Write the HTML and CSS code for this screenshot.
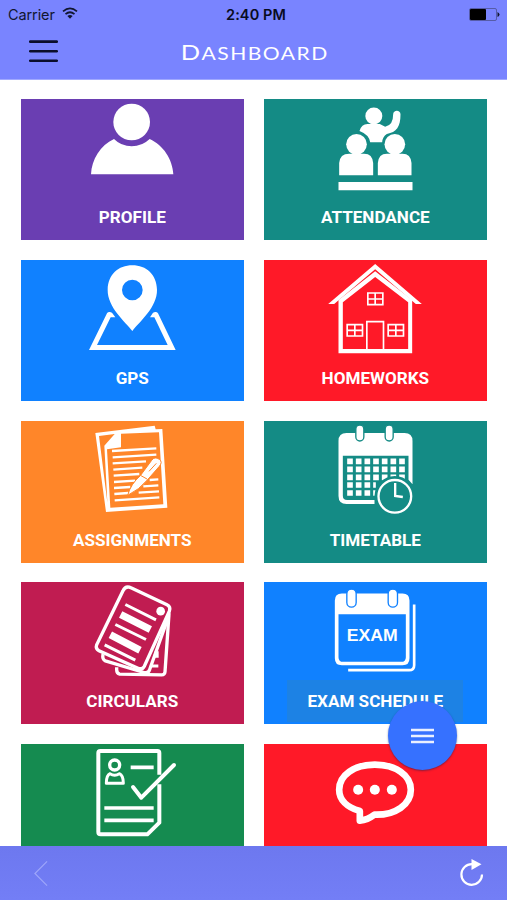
FILE: index.html
```html
<!DOCTYPE html>
<html lang="en">
<head>
<meta charset="utf-8">
<title>Dashboard</title>
<link rel="stylesheet" href="styles.css">
</head>
<body>
<div class="app">
  <header class="header">
    <div class="status">
      <div class="carrier"><span>Carrier</span>
        <svg class="wifi" viewBox="0 0 16 12"><g fill="none" stroke="#111630" stroke-width="1.700"><path d="M1 4.3Q8-1.6 15 4.3"/><path d="M3.5 7.2Q8 3.3 12.5 7.2"/></g><path d="M5.4 9Q8 7 10.6 9L8 11.8Z" fill="#111630"/></svg>
      </div>
      <div class="time">2:40 PM</div>
      <svg class="battery" viewBox="0 0 31 13"><rect x=".5" y=".5" width="27" height="12" rx="1.5" fill="none" stroke="#4c5292" stroke-width=".8"/><rect x="1" y="1" width="16" height="11" rx="1" fill="#000"/><path d="M28.5 4Q30.5 5 30.5 6.5T28.5 9Z" fill="#111630"/></svg>
    </div>
    <div class="navbar">
      <svg class="menu" viewBox="0 0 28 22"><path d="M1.2 1.5H26.8M1.2 10.7H26.8M1.2 20H26.8" stroke="#0b0e2c" stroke-width="2.5" stroke-linecap="round"/></svg>
      <h1 class="title">Dashboard</h1>
      <span></span>
    </div>
  </header>

  <main class="grid">
    <section class="tile purple">
      <svg class="icon" viewBox="187 26 360 300"><circle cx="366" cy="95" r="55"/><path d="M244 252C246 208 272 164 313 146Q335 168 366 168T420 146C461 164 489 208 491 252Z"/></svg>
      <div class="label">PROFILE</div>
    </section>
    <section class="tile teal">
      <svg class="icon" viewBox="181.5 26 360 300"><circle cx="358" cy="77" r="25.500"/><path d="M315 122Q321 101 339 101H376L392 109Q416 106 416 72C416 58 438 58 438 72C438 110 426 126 397 131Q384 139 383 156H347Q344 133 315 122Z"/><circle cx="306" cy="162" r="31"/><circle cx="421" cy="162" r="31"/><path d="M254 255V218Q256 190 284 190H329Q354 190 356 218V255ZM370 255V218Q372 190 397 190H444Q469 190 471 218V255ZM252 275H474V300H252Z"/></svg>
      <div class="label">ATTENDANCE</div>
    </section>

    <section class="tile blue">
      <svg class="icon" viewBox="187 30 360 300"><path fill-rule="evenodd" d="M368 243C347 215 293 172 294 119C295 74 326 46 368 46S441 74 442 119C443 172 389 215 368 243ZM399 120A31 31 0 1 0 337 120A31 31 0 1 0 399 120Z"/><path d="M238 300L292 190Q295 185 301 186L307 188L317 202H303L262 285H474L434 202H421L430 188L436 186Q442 185 445 190L498 300Z"/></svg>
      <div class="label">GPS</div>
    </section>
    <section class="tile red">
      <svg class="icon" viewBox="181.500 30 360 300"><path d="M221 162L362 42L502 162H484L362 58L239 162Z"/><path d="M252 310V150L362 64L473 150V310ZM265 297H461V157L362 81L265 157Z" fill-rule="evenodd"/><g class="line" stroke-width="5"><path d="M337 298V215H387V298"/><path d="M340 129H385V164H340ZM362 129V164M340 147H385"/><path d="M278 224H324V258H278ZM301 224V258M278 241H324"/><path d="M401 224H447V258H401ZM424 224V258M401 241H447"/></g></svg>
      <div class="label">HOMEWORKS</div>
    </section>

    <section class="tile orange">
      <svg class="icon" viewBox="187 18 360 300"><path d="M257 54L435 32L438 43L458 42L473 278L289 291ZM268 63L293 262L284 92L315 57ZM334 56V97L292 103L302 278L461 268L448 52Z" fill-rule="evenodd"/><g class="line" stroke-width="7"><path d="M307 108L440 100M309 127L440 119M309 145L409 139M311 164L398 158M312 182L389 177M313 201L376 197M313 219L362 216M314 237L356 234M315 256L449 247M387 233L448 229M401 214L446 211M420 195L446 193"/></g><path class="pen" d="M354 241Q363 207 392 182L426 136Q435 123 449 133Q460 141 449 154L413 195Q389 224 354 241Z"/><path d="M394 182L412 192M418 169L440 145" fill="none" stroke="#ff8629" stroke-width="3"/></svg>
      <div class="label">ASSIGNMENTS</div>
    </section>
    <section class="tile teal">
      <svg class="icon" viewBox="181.500 18 360 300"><path fill-rule="evenodd" d="M276 54H450Q474 54 474 78V208L462 194V122H265V242Q265 255 278 255H360V267H276Q252 267 252 243V78Q252 54 276 54Z"/><g class="line" stroke-width="17" stroke-dasharray="17 9"><path d="M278 139H451M278 163H451M278 187H451M278 210H364M278 234H364"/></g><g stroke="#148b85" stroke-width="4"><rect x="304" y="30" width="24" height="48" rx="12"/><rect x="392" y="30" width="24" height="48" rx="12"/></g><circle cx="421" cy="244" r="61" fill="#148b85"/><circle cx="421" cy="244" r="49" class="line" stroke-width="7"/><path class="line" stroke-width="7" d="M422 204V243L445 246"/></svg>
      <div class="label">TIMETABLE</div>
    </section>

    <section class="tile pink">
      <svg class="icon" viewBox="187 22.500 360 300"><g class="line" stroke-width="10" stroke-linejoin="round"><path d="M473 105L478 118L466 292Q465 301 456 301L330 299Q321 297 321 286V278"/><path d="M477 125L420 285Q416 298 403 294L287 259Q277 255 280 239"/></g><path d="M435 230H447V250H430ZM426 270H446V279H423Z"/><path d="M367 41L472 91Q484 97 479 110L404 275Q398 287 385 281L268 229Q257 223 261 211L340 49Q346 35 359 38Z" fill="#c01c51" stroke="#fff" stroke-width="10"/><circle cx="453" cy="110" r="13"/><g class="line"><path stroke-width="9" d="M347 90L439 136M317 150L409 195M285 211L377 257"/><path stroke-width="22" d="M333 120L422 165M302 181L391 227"/></g></svg>
      <div class="label">CIRCULARS</div>
    </section>
    <section class="tile blue">
      <svg class="icon" viewBox="181.500 22.500 360 300"><path fill-rule="evenodd" d="M262 57H444Q465 57 465 78V251Q465 272 444 272H262Q241 272 241 251V78Q241 57 262 57ZM252 119V248Q252 262 266 262H440Q454 262 454 248V119Z"/><path class="line" stroke-width="8" d="M479 90V272Q479 287 464 287H281"/><g stroke="#1081ff" stroke-width="4"><rect x="277" y="44" width="28" height="54" rx="14"/><rect x="401" y="44" width="28" height="54" rx="14"/></g><text class="exam" x="353" y="200" text-anchor="middle" textLength="153" lengthAdjust="spacingAndGlyphs">EXAM</text></svg>
      <div class="label shaded">EXAM SCHEDULE</div>
    </section>

    <section class="tile green">
      <svg class="icon" viewBox="187 26 360 300"><g class="line" stroke-width="12" stroke-linejoin="round"><path d="M449 118V53Q449 47 443 47H272Q266 47 266 53V290Q266 297 273 297H413L449 262V147"/><path stroke-linecap="round" d="M370 155L395 187L493 89"/><path stroke-width="11" d="M363 96H432M284 218H432M284 255H432"/><circle cx="315" cy="89" r="15" stroke-width="10"/><path stroke-width="9" d="M301 115Q290 120 290 144H341Q341 120 329 115Q315 124 301 115Z"/></g></svg>
    </section>
    <section class="tile red">
      <svg class="icon" viewBox="181.500 26 360 300"><path class="line" stroke-width="20" stroke-linejoin="round" d="M316 256V227C277 216 254 193 254 163C254 119 299 88 361 88S469 119 469 163S423 240 360 238Q339 254 316 256Z"/><circle cx="311" cy="163" r="15"/><circle cx="361" cy="163" r="15"/><circle cx="412" cy="163" r="15"/></svg>
    </section>
  </main>

  <footer class="toolbar">
    <svg class="back" viewBox="0 0 15 28"><path d="M14 1L1 14L14 27" fill="none" stroke="#9da5fa" stroke-width="1.300"/></svg>
    <svg class="reload" viewBox="0 0 24 28"><path d="M12 5.200A10.300 10.300 0 1 0 22 15.500" fill="none" stroke="#fff" stroke-width="2.200"/><path d="M11.500 0L21.500 5.300L11.500 11Z" fill="#fff"/></svg>
  </footer>
  <div class="fab"><svg viewBox="0 0 23 16"><path d="M0 2H23M0 8H23M0 14H23" stroke="#eaf0ff" stroke-width="2.400"/></svg></div>
</div>
</body>
</html>
```
FILE: styles.css
```css
* { box-sizing: border-box; }
body { margin: 0; background: #fff; font-family: Roboto, sans-serif; }
.app { position: relative; width: 507px; height: 900px; overflow: hidden; display: flex; flex-direction: column; }
svg { display: block; }
.header { height: 79.5px; flex: none; background: #7984ff; border-bottom: 1px solid #a1a9ff; }
.status { height: 27px; display: grid; grid-template-columns: 1fr auto 1fr; align-items: center; padding: 1px 7px 0 8px; color: #111630; }
.carrier { display: flex; align-items: center; gap: 7px; font: 14.5px Inter, sans-serif; letter-spacing: -.1px; }
.wifi { width: 16px; height: 12px; margin-top: -2px; }
.time { font: 600 14.5px Inter, sans-serif; letter-spacing: .1px; color: #080b20; margin-left: 4px; }
.battery { width: 31px; height: 13px; justify-self: end; }
.navbar { display: grid; grid-template-columns: 1fr auto 1fr; align-items: center; height: 50px; padding: 0 29px; }
.menu { width: 29px; height: 23px; margin-top: -2px; }
.title { margin: 1px 0 0 2px; font: 400 17px/24px Lato, sans-serif; letter-spacing: 1.2px; text-transform: uppercase; color: #fff; transform: scaleX(1.24); }
.title::first-letter { font-size: 20.5px; }
.grid { flex: 1; min-height: 0; overflow: hidden; display: grid; grid-template-columns: 223.5px 223.5px; grid-auto-rows: 141.7px; gap: 19.6px; align-content: start; padding: 19px 0 0 20.5px; }
.tile { display: flex; flex-direction: column; align-items: center; color: #fff; overflow: hidden; }
.icon { width: 120px; height: 100px; flex: none; fill: #fff; }
.line { fill: none; stroke: #fff; }
.pen { stroke: #ff8629; stroke-width: 3; }
.exam { font: 700 52px "Liberation Sans", sans-serif; }
.label { width: 176px; height: 42px; margin-top: -2.5px; text-align: center; font-weight: 700; font-size: 17.1px; line-height: 42px; }
.shaded { background: #1d82e4; }
.purple { background: #6a3eb2; }
.teal { background: #148b85; }
.blue { background: #1081ff; }
.red { background: #ff1928; }
.orange { background: #ff8629; }
.pink { background: #c01c51; }
.green { background: #158b50; }
.toolbar { height: 54px; flex: none; display: flex; justify-content: space-between; align-items: center; padding: 0 23px 0 34px; background: linear-gradient(#6d78ef, #737ef6); }
.back { width: 14px; height: 27px; }
.reload { width: 24px; height: 28px; }
.fab { position: absolute; left: 388px; top: 701px; width: 69px; height: 69px; border-radius: 50%; background: #3671ff; box-shadow: 0 1px 2px rgba(20, 30, 80, .5); display: flex; align-items: center; justify-content: center; }
.fab svg { width: 23px; height: 16px; }
```
